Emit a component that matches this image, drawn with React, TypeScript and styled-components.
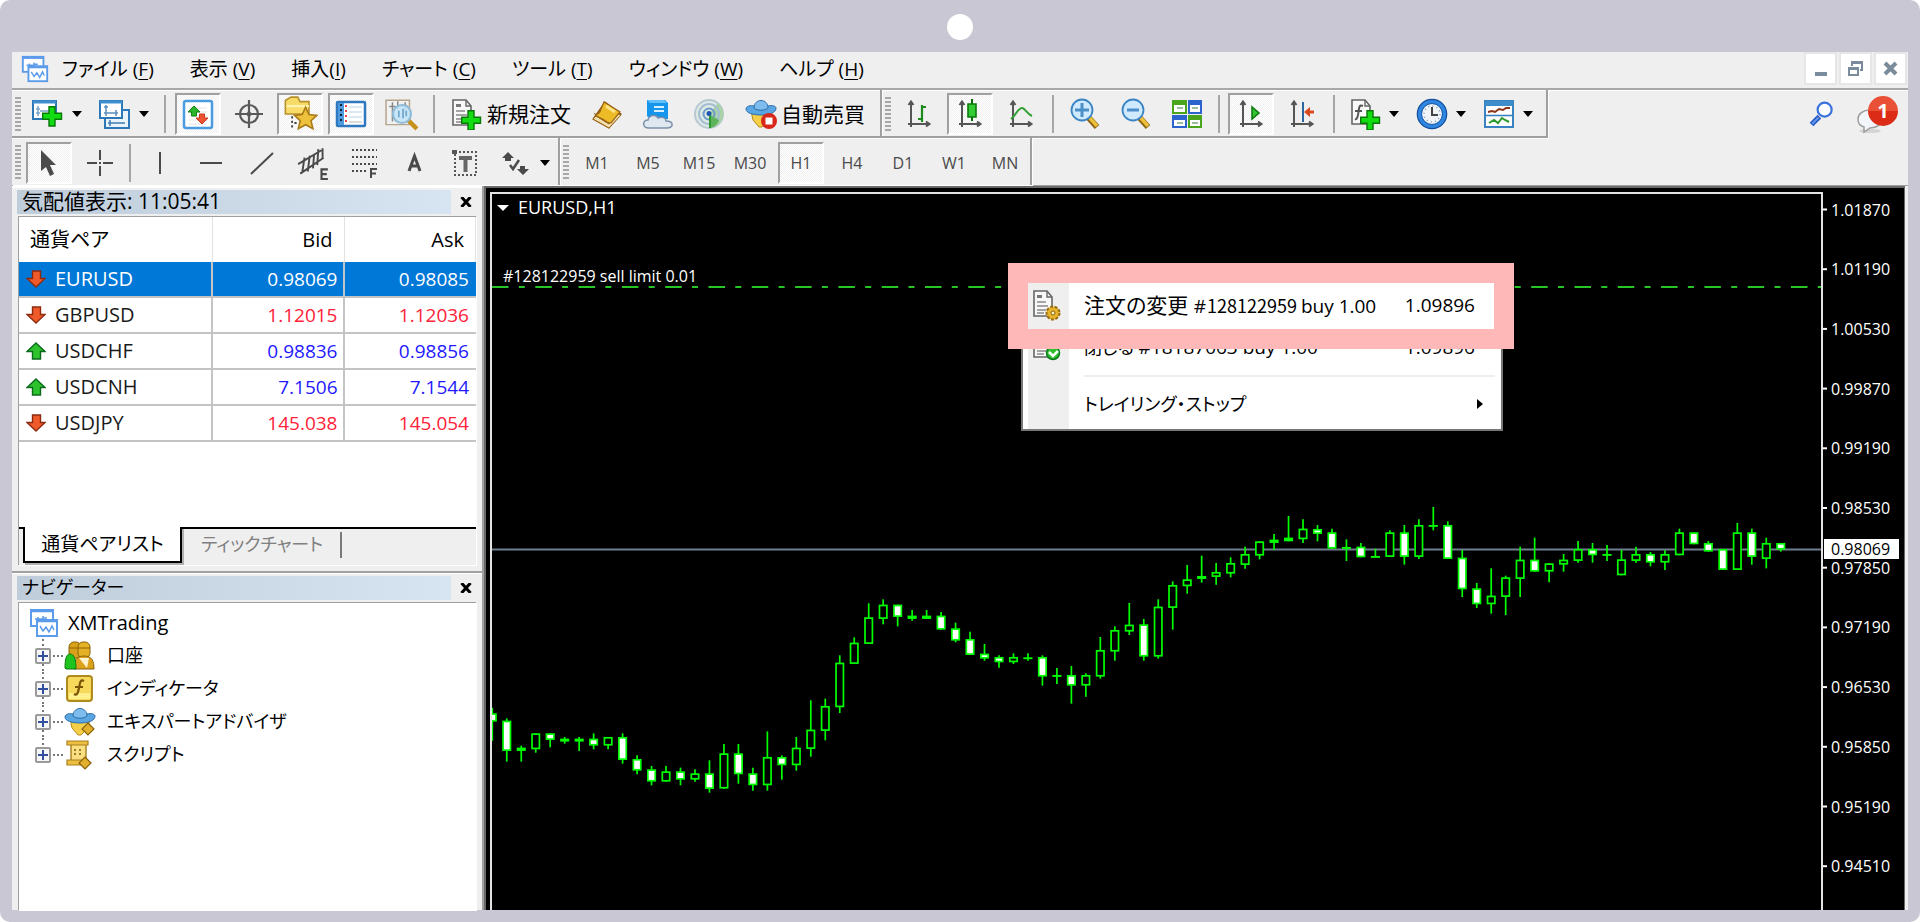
import React from "react";
import styled, { createGlobalStyle, css } from "styled-components";

const LATIN = '"Open Sans", "Noto Sans CJK JP", sans-serif';
const FACE = "#efefef";
const EDGE = "#a0a0a0";
const LIME = "#00ff00";

const GlobalStyle = createGlobalStyle`
  * { box-sizing: border-box; }
  body {
    margin: 0;
    background: #fff;
    color: #000;
    font: 20px/24px ${LATIN};
    font-feature-settings: "palt";
  }
  button, input { font: inherit; font-feature-settings: inherit; color: inherit; }
  button { padding: 0; border: 0; background: none; cursor: pointer; }
  svg { display: block; flex: none; }
`;

const pressedLook = css`
  border: 2px solid;
  border-color: ${EDGE} #fff #fff ${EDGE};
  background: repeating-conic-gradient(#fff 0 25%, #f0f0f0 0 50%) 0 0 / 2px 2px;
`;

const Device = styled.div`
  display: flex;
  flex-direction: column;
  min-height: 100vh;
  padding: 0 12px 12px;
  border-radius: 10px;
  background: #c8c7d3;
`;

const Bezel = styled.div`
  display: flex;
  align-items: center;
  justify-content: center;
  height: 52px;
  padding-top: 2px;
`;

const Camera = styled.span`
  width: 26px;
  height: 26px;
  border-radius: 50%;
  background: #fff;
`;

const Terminal = styled.main`
  flex: 1;
  display: flex;
  flex-direction: column;
  background: ${FACE};
`;

const MenuBar = styled.nav`
  display: flex;
  align-items: center;
  height: 38px;
  padding: 0 1px 3px 8px;
  border-bottom: 2px solid #a8a8a8;
  box-shadow: inset 0 -1px ${FACE}, 0 1px #fff;
`;

const MenuList = styled.ul`
  display: flex;
  flex: 1;
  gap: 36px;
  margin: 0 0 0 12px;
  padding: 0;
  font-size: 19px;
  list-style: none;
`;

const MenuItem = styled.button`
  white-space: nowrap;
  u { text-underline-offset: 3px; }
`;

const WindowButtons = styled.div`
  display: flex;
  gap: 2px;
`;

const WindowButton = styled.button`
  display: grid;
  place-items: center;
  width: 33px;
  height: 33px;
  border: 2px solid #e6e6e6;
  background: #fff;
`;

const ToolRow = styled.div`
  display: flex;
  height: 48px;
`;

const ToolGroup = styled.div`
  display: flex;
  align-items: center;
  gap: 5px;
  padding: 2px 7px 0 3px;
  border-right: 2px solid ${EDGE};
  border-bottom: 2px solid ${EDGE};
  box-shadow: 1px 1px #fff, inset 0 1px #fff;
`;

const ToolRowTwo = styled(ToolRow)`
  border-bottom: 1px solid ${EDGE};
  ${ToolGroup} {
    padding-right: 2px;
    border-bottom: 0;
  }
`;

const Grip = styled.span`
  width: 6px;
  height: 35px;
  background: repeating-linear-gradient(#a8a8a8 0 2px, ${FACE} 2px 4px);
`;

const Divider = styled.span<{ $room: number }>`
  width: 2px;
  height: 38px;
  margin: 0 ${(p) => p.$room}px;
  background: #a6a6a6;
`;

const ToolButton = styled.button<{ $pressed?: boolean }>`
  display: flex;
  align-items: center;
  justify-content: center;
  width: 46px;
  height: 42px;
  color: #4a4a4a;
  font-size: 16px;
  ${(p) => p.$pressed && pressedLook}
`;

const SplitButton = styled(ToolButton)`
  gap: 8px;
  width: auto;
  padding: 0 6px;
`;

const LabelButton = styled(ToolButton)`
  gap: 4px;
  width: auto;
  padding: 0 8px;
  color: #000;
  font-size: 21px;
  white-space: nowrap;
`;

const RightTools = styled.div`
  display: flex;
  align-items: center;
  gap: 10px;
  margin-left: auto;
  padding-right: 9px;
`;

const Alerts = styled.button`
  position: relative;
  width: 44px;
  height: 40px;
`;

const AlertCount = styled.span`
  position: absolute;
  top: 2px;
  right: 1px;
  width: 30px;
  height: 30px;
  border-radius: 50%;
  background: linear-gradient(#ea5036 50%, #dc2c17 50%);
  color: #fff;
  font-weight: 700;
  line-height: 30px;
  text-align: center;
`;

const Workspace = styled.div`
  flex: 1;
  display: flex;
`;

const SideColumn = styled.aside`
  display: flex;
  flex-direction: column;
  flex: 0 0 472px;
  border-right: 2px solid ${EDGE};
`;

const Panel = styled.section<{ $fill?: boolean }>`
  display: flex;
  flex-direction: column;
  flex: ${(p) => (p.$fill ? "1" : "none")};
  padding: ${(p) => (p.$fill ? "3px 5px 0 5px" : "3px 5px 6px 5px")};
  border-top: ${(p) => (p.$fill ? `2px solid ${EDGE}` : "1px solid #fff")};
  box-shadow: inset 0 1px #fff;
`;

const PanelHeader = styled.header`
  display: flex;
  height: 24px;
  margin-bottom: 2px;
`;

const PanelTitle = styled.h2<{ $size: number }>`
  flex: 1;
  margin: 0;
  padding-left: 5px;
  background: linear-gradient(90deg, #bfcddb, #d7e4f2);
  font-size: ${(p) => p.$size}px;
  font-weight: 400;
  line-height: 22px;
`;

const PanelClose = styled.button`
  display: grid;
  place-items: center;
  width: 26px;
  padding-left: 4px;
`;

const PanelBody = styled.div`
  flex: 1;
  margin: 0 1px;
  border: 1px solid ${EDGE};
  border-width: 1px 0 0 1px;
  box-shadow: 1px 1px #fff;
  background: #fff;
`;

const QuoteArea = styled.div`
  min-height: 310px;
`;

const QuoteTable = styled.table`
  width: 100%;
  table-layout: fixed;
  border-collapse: separate;
  border-spacing: 0;
  th {
    height: 45px;
    padding: 0 11px;
    border-right: 1px solid #e2e2e2;
    font-weight: 400;
    text-align: right;
  }
  th:first-child { width: 194px; text-align: left; }
  td {
    height: 36px;
    padding: 0 5px 0 7px;
    border-right: 2px solid #c4c4c4;
    border-bottom: 2px solid #c4c4c4;
    font-size: 19px;
    text-align: right;
  }
  td:last-child { border-right: 0; padding-right: 7px; }
`;

const QuoteRow = styled.tr<{ $up?: boolean; $selected?: boolean }>`
  color: ${(p) => (p.$selected ? "#fff" : p.$up ? "#2418ff" : "#ff2238")};
  background: ${(p) => (p.$selected ? "#0078d7" : "#fff")};
`;

const Symbol = styled.span<{ $selected?: boolean }>`
  display: flex;
  align-items: center;
  gap: 9px;
  color: ${(p) => (p.$selected ? "#fff" : "#1a1a1a")};
  font-size: 20px;
`;

const TabStrip = styled.div`
  display: flex;
  height: 38px;
  border-top: 2px solid #000;
  background: ${FACE};
`;

const ActiveTab = styled.button`
  width: 159px;
  height: 36px;
  margin: -2px 0 0 4px;
  border: 2px solid #000;
  border-top: 0;
  background: #fff;
  box-shadow: 2px 2px #b0b0b0;
  font-size: 19px;
`;

const IdleTab = styled.button`
  height: 26px;
  margin: 3px 0 0 4px;
  padding: 0 17px 2px 15px;
  border-right: 2px solid #7a7a7a;
  color: #808080;
  font-size: 18px;
`;

const Tree = styled.ul`
  margin: 0;
  padding: 4px 0 0 16px;
  list-style: none;
`;

const TreeRoot = styled.li`
  display: flex;
  align-items: center;
  gap: 8px;
  height: 32px;
  margin-left: -7px;
`;

const TreeItem = styled.li`
  display: flex;
  align-items: center;
  height: 33px;
`;

const Branch = styled.span`
  display: flex;
  flex-direction: column;
  align-items: center;
  align-self: stretch;
  width: 16px;
`;

const BranchLine = styled.span<{ $hidden?: boolean }>`
  flex: 1;
  width: 2px;
  background: ${(p) => (p.$hidden ? "none" : "repeating-linear-gradient(#777 0 2px, #fff 2px 5px)")};
`;

const Twig = styled.span`
  width: 10px;
  height: 2px;
  margin: 0 1px 0 2px;
  background: repeating-linear-gradient(90deg, #777 0 2px, #fff 2px 4px);
`;

const Expander = styled.button`
  display: grid;
  place-items: center;
  width: 16px;
  height: 16px;
  border: 2px solid #9a9a9a;
  border-radius: 2px;
  background: #f6f6f6;
`;

const TreeLabel = styled.span`
  margin-left: 11px;
  padding-bottom: 2px;
  font-size: 18px;
`;

const ChartWindow = styled.section`
  position: relative;
  flex: 1;
  display: flex;
  min-width: 0;
  padding: 4px 0 0 4px;
  border: solid #696969;
  border-width: 2px 1px 0 2px;
  margin-right: 3px;
  background: #000;
`;

const Plot = styled.div`
  flex: 1;
  display: flex;
  min-width: 0;
  border: 2px solid #e4e4e4;
  border-bottom: 0;
  svg { flex: 1; min-width: 0; width: 100%; }
`;

const Axis = styled.svg`
  width: 81px;
  overflow: visible;
`;

const ContextMenu = styled.div`
  position: absolute;
  top: 94px;
  left: 535px;
  width: 482px;
  padding: 1px 3px 4px;
  border: 1px solid #777;
  border-width: 1px 2px 2px 2px;
  background: linear-gradient(90deg, #fff 5px, #efefef 5px 46px, #fff 46px);
`;

const ContextItem = styled.button`
  display: flex;
  align-items: center;
  width: 100%;
  height: 42px;
  padding: 0 15px 0 6px;
  font-size: 19px;
  text-align: left;
`;

const ContextIcon = styled.span`
  width: 32px;
  height: 32px;
  margin-right: 20px;
`;

const ContextLabel = styled.span`
  flex: 1;
  white-space: nowrap;
`;

const ContextPrice = styled.span`
  margin-right: 8px;
`;

const ContextKanji = styled.span`
  font-size: 21px;
`;

const ContextKana = styled.span`
  font-size: 18px;
`;

const OrderNumber = styled.span`
  margin: 0 4px 0 1px;
  font: 18px/24px "Noto Sans CJK JP", sans-serif;
`;

const ContextRule = styled.hr`
  height: 2px;
  margin: 7px 3px 6px 58px;
  border: 0;
  background: #efefef;
`;

const Spotlight = styled.div`
  position: absolute;
  top: 75px;
  left: 522px;
  width: 506px;
  height: 86px;
  border: 20px solid #ffb8b8;
  pointer-events: none;
`;

/* ---------- icons ---------- */

const Icon = ({ children, size = 32 }: { children: React.ReactNode; size?: number }) => (
  <svg width={size} height={size} viewBox="0 0 32 32" fill="none" aria-hidden="true">
    {children}
  </svg>
);

const Caret = () => (
  <svg width="10" height="6" viewBox="0 0 10 6" aria-hidden="true">
    <path d="M0 0h10L5 6z" fill="#000" />
  </svg>
);

const Plus = ({ x, y }: { x: number; y: number }) => (
  <path
    transform={`translate(${x} ${y})`}
    d="M7 .7h6v6.500h6.500v6H13V20H7v-6.800H.7v-6H7z"
    fill="#12dd12"
    stroke="#087808"
    strokeWidth="1.400"
  />
);

const DocShape = ({ x = 3, y = 1 }: { x?: number; y?: number }) => (
  <g transform={`translate(${x} ${y})`}>
    <path d="M1 1h13l5 6v19H1z" fill="#f8f8f8" stroke="#666" strokeWidth="1.600" />
    <path d="M14 1v6h5" stroke="#666" strokeWidth="1.400" />
    <path d="M4 5h5v3H4z" fill="#777" />
    <path d="M4 12h9M4 16h11M4 20h9M4 23h7" stroke="#888" strokeWidth="1.300" />
  </g>
);

const Axes = () => (
  <path
    d="M8 4v25M5 26h21M5.500 7L8 3.500 10.500 7M23 23.500l3.500 2.500-3.500 2.500"
    stroke="#555"
    strokeWidth="2"
  />
);

const AppIcon = ({ size = 30 }: { size?: number }) => (
  <Icon size={size}>
    <rect x="3" y="3" width="22" height="16" fill="#fff" stroke="#5b9bea" strokeWidth="2" />
    <path d="M3 4h22" stroke="#5b9bea" strokeWidth="2.500" />
    <path d="M7 12h3m0-2v4m0-2h5m0-3v5m0-3h4" stroke="#5b9bea" strokeWidth="1.500" />
    <rect x="9" y="13" width="20" height="16" fill="#fff" stroke="#5b9bea" strokeWidth="2" />
    <path d="M9 14h20" stroke="#5b9bea" strokeWidth="2.500" />
    <path d="M12 19l3 5 3-4 3 5 3-6 2 4" stroke="#5b9bea" strokeWidth="1.500" />
  </Icon>
);

const NewChart = () => (
  <Icon>
    <rect x="1" y="3" width="23" height="18" fill="#fff" stroke="#2f78b8" strokeWidth="2" />
    <path d="M1 4h23" stroke="#3f8fd0" strokeWidth="3" />
    <path d="M6 8v10M4 11h4M4 15h4M8 13h12" stroke="#7aa4c8" strokeWidth="1.500" />
    <Plus x={10} y={8} />
  </Icon>
);

const Profiles = () => (
  <Icon>
    <rect x="6" y="12" width="24" height="18" fill="#e8f3fc" stroke="#2f78b8" strokeWidth="2" />
    <path d="M9 25h17M11 22v6" stroke="#3f7cb0" strokeWidth="1.500" />
    <rect x="1" y="3" width="22" height="17" fill="#fff" stroke="#2f78b8" strokeWidth="2" />
    <path d="M1 4h22" stroke="#3f8fd0" strokeWidth="3" />
    <path d="M5 15h14M5 9h4M7 7v11M17 12v6" stroke="#5b8fbc" strokeWidth="1.500" />
  </Icon>
);

const MarketWatch = () => (
  <Icon>
    <rect x="2" y="3" width="28" height="27" rx="2" fill="#fff" stroke="#4a9be0" strokeWidth="2.500" />
    <path d="M7 10h18M7 14h18M7 18h18M7 22h18M7 26h18" stroke="#e4e4e4" />
    <path d="M12 8l6 6h-3.500v4h-5v-4H6z" fill="#2ab52a" stroke="#158015" />
    <path d="M20 26l-6-6h3.500v-4h5v4H26z" fill="#ee5433" stroke="#c93a1c" />
  </Icon>
);

const Target = () => (
  <Icon>
    <circle cx="16" cy="16" r="9" stroke="#5a5a5a" strokeWidth="2.200" />
    <circle cx="16" cy="16" r="2.500" fill="#777" />
    <path d="M16 2v28M2 16h28" stroke="#5a5a5a" strokeWidth="2.200" />
  </Icon>
);

const FolderStar = () => (
  <Icon size={36}>
    <path d="M3 4l5-3h6l2 4h8v11H3z" fill="#f9dc68" stroke="#b8902a" strokeWidth="1.400" />
    <path d="M4 9h20" stroke="#fff3b0" strokeWidth="2" />
    <path d="M9 18v12M11 24h4" stroke="#444" strokeWidth="1.600" strokeDasharray="2 2" />
    <path d="M21 10l3 6.500 7 .700-5.200 4.800L27.500 29 21 25.500 14.500 29l1.700-7L11 17.200l7-.7z" fill="#eec13c" stroke="#a87a18" strokeWidth="1.400" />
  </Icon>
);

const DataWindow = () => (
  <Icon>
    <rect x="2" y="4" width="28" height="24" rx="1" fill="#fff" stroke="#2f78c0" strokeWidth="2.500" />
    <path d="M3 5h6v22H3z" fill="#4e9ade" />
    <path d="M6 6v20" stroke="#123" strokeWidth="2" strokeDasharray="2 3" />
    <path d="M11 7v19" stroke="#e44" strokeWidth="2" strokeDasharray="2 3" />
    <path d="M14 9h13M14 14h13M14 19h13" stroke="#cfe0f2" strokeWidth="1.500" />
    <path d="M14 24h13" stroke="#bbb" />
  </Icon>
);

const Tester = () => (
  <Icon size={34}>
    <path d="M1 3h22v23H1z" fill="#f2f2f2" stroke="#b5a48c" strokeWidth="1.400" />
    <path d="M7 5v18M12 4v8M19 5v10M4 9h6M15 8h6" stroke="#888" strokeWidth="1.400" />
    <path d="M22 22l8 8" stroke="#c8901c" strokeWidth="4" />
    <circle cx="16" cy="16" r="8.500" fill="#c3e4f8" fillOpacity=".9" stroke="#8fbbd8" strokeWidth="2" />
    <path d="M13 13v6M17 11v9M20 13v5" stroke="#6fa6cc" strokeWidth="1.600" />
  </Icon>
);

const NewOrder = () => (
  <Icon>
    <DocShape x={1} y={1} />
    <Plus x={10} y={12} />
  </Icon>
);

const Book = () => (
  <Icon>
    <path d="M2 21l12-17 16 12-12 14z" fill="#b87818" stroke="#8a5410" strokeWidth="1.200" />
    <path d="M2 21l3-3 13 8 9-10 3 1-12 13z" fill="#f3e0b0" stroke="#9a6418" />
    <path d="M4 16c3 1 5-1 6-5l3-7 16 10-9 11c-3 0-5-1-7-3s-6-2-9-6z" fill="#eebb28" stroke="#9a6418" strokeWidth="1.200" />
    <path d="M15 8l9 6" stroke="#fbe58a" strokeWidth="3" />
  </Icon>
);

const CloudServer = () => (
  <Icon>
    <path d="M5 2h18l3 3v16H8l-3-3z" fill="#1596ec" />
    <path d="M5 2h17l3 3H8z" fill="#64c0fa" />
    <path d="M12 9h10M12 13h10" stroke="#d7f0ff" strokeWidth="2" />
    <path d="M7 30c-7 0-7-8-1-8 1-5 8-6 10-2 4-2 8 0 8 3 8 0 8 7 1 7z" fill="#dfe7f1" stroke="#7d90aa" strokeWidth="1.500" />
  </Icon>
);

const Signals = () => (
  <Icon>
    <circle cx="16" cy="16" r="14" fill="#dfe9e6" stroke="#b6c9d0" strokeWidth="2" />
    <path d="M16 16V30A14 14 0 0 0 25 5z" fill="#a9d2a9" />
    <circle cx="16" cy="16" r="10" stroke="#a3bfd2" strokeWidth="2" />
    <circle cx="16" cy="16" r="5.500" stroke="#6d9cc8" strokeWidth="2" />
    <path d="M17 17v13c5-1 8-4 9-8" fill="#5db45d" />
    <path d="M17 16v14" stroke="#2f9a2f" strokeWidth="2" />
    <circle cx="16" cy="15.500" r="2.500" fill="#1f58b0" />
  </Icon>
);

const HatShape = () => (
  <g>
    <path d="M6 13h20l-2 9-7 7h-3l-6-7z" fill="#f5cf48" stroke="#b88a1e" />
    <path d="M1 11c0-3 5-4 8-3 3 2 11 2 14 0 4-1 8 0 8 2 0 5-7 7-15 7S1 15 1 11z" fill="#5aa6e2" stroke="#2c6ea8" />
    <path d="M9 10c0-10 14-10 14 0-3 3-11 3-14 0z" fill="#7dbcec" stroke="#2c6ea8" />
  </g>
);

const AutoTrade = () => (
  <Icon>
    <HatShape />
    <circle cx="24" cy="23" r="8" fill="#d8281a" />
    <path d="M20.500 19.500h7v7h-7z" fill="#fff" />
  </Icon>
);

const BarsIcon = () => (
  <Icon>
    <Axes />
    <path d="M19 7v17M19 9h4M15 21h4" stroke="#1c8a1c" strokeWidth="2.200" />
  </Icon>
);

const CandlesIcon = () => (
  <Icon>
    <Axes />
    <path d="M18 1v22" stroke="#0a6a0a" strokeWidth="2" />
    <path d="M14 6h8v13h-8z" fill="#34cc34" stroke="#0a7a0a" strokeWidth="1.600" />
  </Icon>
);

const LineIcon = () => (
  <Icon>
    <Axes />
    <path d="M6 21c5-4 7-11 11-11 3 0 5 6 10 8" stroke="#35a035" strokeWidth="2" />
  </Icon>
);

const Zoomer = ({ plus }: { plus?: boolean }) => (
  <Icon>
    <path d="M19 19l9 10" stroke="#8a6210" strokeWidth="6" />
    <path d="M20 19l8 9" stroke="#edc03a" strokeWidth="3.500" />
    <circle cx="13" cy="12" r="10.500" fill="#cfeaff" stroke="#3b84c4" strokeWidth="1.800" />
    <path d={plus ? "M6 12h14M13 5v14" : "M7 12h12"} stroke="#4a8fc8" strokeWidth="3" />
  </Icon>
);

const TileIcon = () => (
  <Icon>
    <path d="M1 2h15v14H1zM17 17h14v13H17z" fill="#4aa51c" />
    <path d="M17 2h14v14H17zM1 17h15v13H1z" fill="#2d63cc" />
    <path d="M3 7h11v7H3zM19 7h10v7H19zM3 22h11v6H3zM19 22h10v6H19z" fill="#fff" />
    <path d="M6 10h6M21 10h6M6 25h6M21 25h6" stroke="#9abf9a" strokeWidth="2" />
  </Icon>
);

const AutoScroll = () => (
  <Icon>
    <Axes />
    <path d="M17 9v12l7-6z" fill="#34c334" stroke="#0a7a0a" strokeWidth="1.500" />
  </Icon>
);

const ChartShift = () => (
  <Icon>
    <Axes />
    <path d="M17 4v20" stroke="#2a66a0" strokeWidth="2" />
    <path d="M18 14l6-5v3.500h4v3h-4V19z" fill="#d84a20" />
  </Icon>
);

const Indicators = () => (
  <Icon>
    <path d="M3 2h13l5 6v18H3z" fill="#fafafa" stroke="#666" strokeWidth="1.600" />
    <path d="M16 2v6h5" stroke="#666" strokeWidth="1.400" />
    <path d="M14 8c-4-2-4 2-4.500 6S8 22 6 21M6 13h7" stroke="#555" strokeWidth="2" />
    <Plus x={11} y={12} />
  </Icon>
);

const ClockIcon = () => (
  <Icon>
    <circle cx="16" cy="16" r="12.500" fill="#f0f4f8" stroke="#2f86e0" strokeWidth="4.500" />
    <circle cx="16" cy="16" r="14.700" stroke="#134d9c" strokeWidth="1.200" />
    <circle cx="16" cy="16" r="10.500" stroke="#1a58a8" strokeWidth="1" />
    <circle cx="16" cy="16" r="8" stroke="#9ab" strokeWidth="1.500" strokeDasharray="1.200 3" />
    <path d="M16 9v8h6" stroke="#444" strokeWidth="2" />
  </Icon>
);

const TemplateIcon = () => (
  <Icon>
    <rect x="2" y="3" width="28" height="26" fill="#fff" stroke="#3b82c0" strokeWidth="2" />
    <path d="M2 5.500h28" stroke="#3f8ccc" strokeWidth="5" />
    <path d="M3 17.500h26" stroke="#3b82c0" strokeWidth="1.600" />
    <path d="M5 14l4-1 3 1 4-3 4 1 3-2h4" stroke="#8c3418" strokeWidth="2" />
    <path d="M6 25l5-3 4 3 4-5 3 2 4 2" stroke="#2a9a2a" strokeWidth="2" />
  </Icon>
);

const PointerIcon = () => (
  <Icon>
    <path d="M8 3v21l5-4 4 9 4-2-4-9h6z" fill="#4a4a4a" />
  </Icon>
);

const CrossIcon = () => (
  <Icon>
    <path d="M16 3v10M16 19v10M3 16h10M19 16h10M15 16h2" stroke="#4a4a4a" strokeWidth="2" />
  </Icon>
);

const StrokeIcon = ({ d, width = 2 }: { d: string; width?: number }) => (
  <Icon>
    <path d={d} stroke="#4a4a4a" strokeWidth={width} />
  </Icon>
);

const ChannelIcon = () => (
  <Icon size={34}>
    <path d="M2 17L24 4M4 26L26 11M8 11l-2 13M13 9l-2 15M17 8l-1 13M21 3l-1 15M25 2v9" stroke="#4a4a4a" strokeWidth="1.800" />
    <path d="M30 22h-6v9h6M24 26.500h5" stroke="#4a4a4a" strokeWidth="2" />
  </Icon>
);

const FiboIcon = () => (
  <Icon>
    <path d="M4 3h25M4 10h25M4 17h25M4 24h16" stroke="#4a4a4a" strokeWidth="2" strokeDasharray="2 2" />
    <path d="M23 31v-9h6M23 26.500h5" stroke="#4a4a4a" strokeWidth="2" />
  </Icon>
);

const TextFrame = () => (
  <Icon>
    <rect x="5" y="5" width="21" height="23" stroke="#555" strokeWidth="2" strokeDasharray="2 2" />
    <path d="M2 3h5v4H2z" fill="#555" />
    <path d="M9 11h13M15.500 11v14" stroke="#666" strokeWidth="4" />
  </Icon>
);

const ShapesIcon = () => (
  <Icon>
    <path d="M2 11l6-6 6 6H11v3H5v-3zM17 22h3v-3h5v3h4l-6 6z" fill="#4a4a4a" />
    <path d="M10 18l3 4 6-9" stroke="#4a4a4a" strokeWidth="2.500" />
  </Icon>
);

const SearchIcon = () => (
  <Icon size={28}>
    <path d="M4 28l9-9" stroke="#2a5ec8" strokeWidth="6" />
    <path d="M5 27l7-7" stroke="#6f9bee" strokeWidth="2" />
    <circle cx="19" cy="11" r="8" fill="#fdfdff" stroke="#3a72dc" strokeWidth="2.500" />
  </Icon>
);

const Trend = ({ up }: { up?: boolean }) => (
  <svg width="20" height="20" viewBox="0 0 20 20" aria-hidden="true">
    {up ? (
      <path d="M10 2l9 8.500h-4.500V18h-8v-7.500H1z" fill="#2cc32c" stroke="#0c6a1c" strokeWidth="1.400" />
    ) : (
      <path d="M10 18l9-8.500h-4.500V2h-8v7.500H1z" fill="#ee5a2a" stroke="#8e2a10" strokeWidth="1.400" />
    )}
  </svg>
);

const AccountsIcon = () => (
  <Icon>
    <rect x="5" y="2" width="12" height="16" rx="5" fill="#d9a21a" stroke="#8a620c" />
    <rect x="14" y="2" width="12" height="16" rx="5" fill="#e6b225" stroke="#8a620c" />
    <path d="M5 8h21" stroke="#8a620c" />
    <path d="M10 29c0-8 2-13 10-13s10 5 10 13z" fill="#dda21c" stroke="#8a620c" />
    <path d="M15 18l8 10 2-10z" fill="#fff2d0" />
    <path d="M1 28c0-8 1-14 5-14s6 5 6 15H2z" fill="#1fc41f" stroke="#0d7a0d" />
  </Icon>
);

const FunctionIcon = () => (
  <Icon>
    <rect x="3" y="3" width="25" height="25" rx="3" fill="#f6d95a" stroke="#b08a1e" strokeWidth="2" />
    <path d="M5 20h21v6H5z" fill="#fff08c" />
    <path d="M20 8c-4-2-4 2-5 7s-2 8-5 6M11 14h8" stroke="#7a5208" strokeWidth="2.200" />
  </Icon>
);

const Diamond = ({ x, y }: { x: number; y: number }) => (
  <path transform={`translate(${x} ${y})`} d="M6 0l6 6-6 6-6-6z" fill="#e2b02c" stroke="#8a620c" strokeWidth="1.200" />
);

const ExpertIcon = () => (
  <Icon>
    <HatShape />
    <Diamond x={18} y={17} />
  </Icon>
);

const ScriptIcon = () => (
  <Icon>
    <path d="M7 5h15v18H7z" fill="#f9df80" stroke="#a87e1e" strokeWidth="1.400" />
    <path d="M3 2h21v4H3zM3 21h18v5H3z" fill="#eec040" stroke="#a87e1e" strokeWidth="1.200" />
    <path d="M10 11h2m3 0h2m-7 4h2m3 0h2" stroke="#7a5c14" strokeWidth="1.600" />
    <Diamond x={15} y={18} />
  </Icon>
);

const OrderEdit = () => (
  <Icon>
    <DocShape x={1} y={1} />
    <circle cx="21" cy="24" r="6.500" fill="#e6b32c" stroke="#9a6c10" strokeWidth="2" strokeDasharray="3 1.500" />
    <circle cx="21" cy="24" r="2" fill="#fff0c0" stroke="#8a620c" />
  </Icon>
);

const OrderClose = () => (
  <Icon>
    <DocShape x={1} y={0} />
    <circle cx="21" cy="22" r="6.500" fill="#2cc02c" stroke="#0c7a1c" strokeWidth="1.500" />
    <path d="M17 21l4 4 5-5" stroke="#fff" strokeWidth="2.500" />
  </Icon>
);

/* ---------- chart ---------- */

type Kind = "w" | "h" | "d"; // filled, hollow, flat
type Bar = [high: number, top: number, bottom: number, low: number, kind: Kind];

// Heights are in thirds of a pixel below each session's own origin.
const SESSIONS: { origin: number; bars: Bar[] }[] = [
  {
    origin: 366,
    bars: [
      [443, 460, 485, 542, "w"], [475, 482, 573, 605, "w"], [557, 563, 573, 605, "d"], [520, 520, 568, 578, "h"],
      [520, 520, 540, 562, "w"], [531, 536, 545, 551, "d"], [531, 536, 545, 573, "d"], [520, 536, 557, 568, "w"],
      [531, 531, 557, 568, "h"], [520, 531, 600, 611, "w"], [586, 597, 632, 643, "w"], [618, 628, 665, 676, "w"],
      [618, 634, 665, 665, "h"], [623, 634, 659, 676, "w"], [628, 640, 659, 665, "h"], [601, 640, 687, 698, "w"],
      [552, 580, 686, 686, "h"], [552, 580, 643, 671, "w"], [623, 640, 676, 692, "w"], [514, 591, 676, 692, "h"],
      [586, 591, 616, 659, "w"], [531, 563, 616, 632, "h"], [421, 509, 567, 590, "h"], [416, 438, 513, 541, "h"],
      [286, 308, 442, 459, "h"], [232, 248, 312, 312, "h"], [130, 172, 252, 252, "h"], [118, 134, 177, 193, "h"],
      [134, 134, 171, 199, "w"], [150, 167, 177, 182, "d"], [150, 167, 177, 177, "d"], [156, 167, 209, 209, "w"],
      [188, 205, 242, 247, "w"],
    ],
  },
  {
    origin: 306,
    bars: [
      [395, 417, 465, 465, "w"], [432, 461, 476, 482, "w"], [466, 471, 487, 503, "w"], [460, 471, 487, 492, "h"],
      [460, 472, 476, 482, "d"], [466, 471, 530, 557, "w"], [504, 525, 530, 552, "d"], [498, 525, 557, 611, "w"],
      [520, 525, 557, 590, "h"], [411, 450, 530, 536, "h"], [379, 390, 455, 482, "h"], [309, 374, 395, 405, "h"],
      [357, 373, 470, 482, "w"], [298, 320, 470, 476, "h"], [244, 255, 324, 389, "h"], [195, 238, 259, 281, "h"],
      [167, 228, 237, 248, "d"], [189, 216, 231, 254, "h"], [172, 189, 221, 232, "h"], [140, 162, 195, 206, "h"],
      [124, 124, 167, 178, "h"], [102, 119, 129, 150, "d"], [48, 113, 124, 124, "d"], [58, 86, 118, 129, "h"],
      [75, 87, 102, 124, "w"], [86, 97, 146, 146, "w"], [118, 141, 146, 183, "d"], [129, 140, 172, 172, "w"],
      [146, 168, 172, 172, "d"],
    ],
  },
  {
    origin: 286,
    bars: [
      [151, 157, 231, 231, "h"], [135, 157, 231, 254, "w"], [118, 135, 231, 237, "h"], [81, 135, 140, 151, "d"],
      [124, 135, 237, 237, "w"], [210, 233, 328, 351, "w"], [309, 325, 373, 384, "w"], [265, 347, 373, 401, "h"],
      [287, 292, 351, 405, "h"], [200, 239, 297, 351, "h"], [173, 239, 275, 275, "w"], [250, 250, 275, 307, "h"],
      [222, 239, 254, 275, "h"], [183, 207, 243, 248, "h"], [189, 207, 226, 248, "w"], [195, 222, 226, 243, "d"],
      [210, 238, 286, 286, "h"], [200, 222, 243, 248, "h"], [216, 222, 248, 259, "w"], [211, 222, 248, 270, "h"],
      [146, 157, 226, 226, "h"], [157, 157, 193, 193, "w"], [183, 189, 215, 215, "w"], [207, 207, 270, 270, "w"],
      [129, 157, 270, 270, "h"], [146, 157, 231, 254, "w"], [173, 189, 237, 265, "h"], [189, 189, 209, 215, "w"],
    ],
  },
];

const BARS = SESSIONS.flatMap(({ origin, bars }) =>
  bars.map(([high, top, bottom, low, kind]) => ({
    high: origin + high / 3,
    top: origin + top / 3,
    bottom: origin + bottom / 3,
    low: origin + low / 3,
    kind,
  })),
);

const BAR_STEP = 14.477;
const BODY_FILL: Record<Kind, string> = { w: "#fff", h: "#000", d: LIME };

const Candles = () => (
  <g stroke={LIME} strokeWidth="1.700">
    {BARS.map((bar, i) => {
      const x = i * BAR_STEP + 0.3;
      const body = Math.max(bar.bottom - bar.top - 1.7, 0.2);
      return (
        <g key={i}>
          <path d={`M${x} ${bar.high}V${bar.low}`} />
          <rect x={x - 3.7} y={bar.top + 0.8} width="7.400" height={body} fill={BODY_FILL[bar.kind]} />
        </g>
      );
    })}
  </g>
);

const PRICES = [
  "1.01870", "1.01190", "1.00530", "0.99870", "0.99190", "0.98530",
  "0.97850", "0.97190", "0.96530", "0.95850", "0.95190", "0.94510",
];

const PriceAxis = () => (
  <Axis aria-label="価格">
    {PRICES.map((price, i) => {
      const y = 17.5 + i * 59.7;
      return (
        <g key={price}>
          <path d={`M0 ${y}h4`} stroke="#fff" strokeWidth="2" />
          <text x="8" y={y + 6} fill="#fff" fontSize="16">{price}</text>
        </g>
      );
    })}
    <rect x="1" y="347" width="75" height="20" fill="#fff" />
    <text x="8" y="363" fill="#000" fontSize="16">0.98069</text>
  </Axis>
);

/* ---------- content ---------- */

const MENUS = [
  ["ファイル ", "F"], ["表示 ", "V"], ["挿入", "I"], ["チャート ", "C"],
  ["ツール ", "T"], ["ウィンドウ ", "W"], ["ヘルプ ", "H"],
];

const QUOTES = [
  { symbol: "EURUSD", bid: "0.98069", ask: "0.98085", selected: true },
  { symbol: "GBPUSD", bid: "1.12015", ask: "1.12036" },
  { symbol: "USDCHF", bid: "0.98836", ask: "0.98856", up: true },
  { symbol: "USDCNH", bid: "7.1506", ask: "7.1544", up: true },
  { symbol: "USDJPY", bid: "145.038", ask: "145.054" },
];

const TREE = [
  { label: "口座", icon: <AccountsIcon /> },
  { label: "インディケータ", icon: <FunctionIcon /> },
  { label: "エキスパートアドバイザ", icon: <ExpertIcon /> },
  { label: "スクリプト", icon: <ScriptIcon /> },
];

const PERIODS = ["M1", "M5", "M15", "M30", "H1", "H4", "D1", "W1", "MN"];

const Tool = ({ name, pressed, children }: { name: string; pressed?: boolean; children: React.ReactNode }) => (
  <ToolButton type="button" aria-label={name} aria-pressed={pressed} $pressed={pressed}>
    {children}
  </ToolButton>
);

const Split = ({ name, children }: { name: string; children: React.ReactNode }) => (
  <SplitButton type="button" aria-label={name} aria-haspopup="menu">
    {children}
    <Caret />
  </SplitButton>
);

const Header = ({ title, size }: { title: string; size: number }) => (
  <PanelHeader>
    <PanelTitle $size={size}>{title}</PanelTitle>
    <PanelClose type="button" aria-label="閉じる">
      <svg width="12" height="10" viewBox="0 0 12 10">
        <path d="M1.500 0l9 10M10.500 0l-9 10" stroke="#000" strokeWidth="3" />
      </svg>
    </PanelClose>
  </PanelHeader>
);

const MainMenu = () => (
  <MenuBar>
    <AppIcon />
    <MenuList>
      {MENUS.map(([label, key]) => (
        <li key={key}>
          <MenuItem type="button">{label}(<u>{key}</u>)</MenuItem>
        </li>
      ))}
    </MenuList>
    <WindowButtons>
      <WindowButton type="button" aria-label="最小化">
        <svg width="20" height="20"><path d="M4 15h12" stroke="#7a8b9c" strokeWidth="4" /></svg>
      </WindowButton>
      <WindowButton type="button" aria-label="元に戻す">
        <svg width="20" height="20" fill="none" stroke="#7a8b9c" strokeWidth="2">
          <path d="M6 7V3h10v8h-2M6 4h10" />
          <path d="M3 9h9v7H3zM3 10h9" />
        </svg>
      </WindowButton>
      <WindowButton type="button" aria-label="閉じる">
        <svg width="20" height="20"><path d="M4 4l11 11M15 4L4 15" stroke="#7a8b9c" strokeWidth="4" /></svg>
      </WindowButton>
    </WindowButtons>
  </MenuBar>
);

const MainTools = () => (
  <ToolRow>
    <ToolGroup>
      <Grip />
      <Split name="新規チャート"><NewChart /></Split>
      <Split name="チャートの組表示"><Profiles /></Split>
      <Divider $room={4} />
      <Tool name="気配値表示" pressed><MarketWatch /></Tool>
      <Tool name="データウィンドウ"><Target /></Tool>
      <Tool name="ナビゲーター" pressed><FolderStar /></Tool>
      <Tool name="ターミナル" pressed><DataWindow /></Tool>
      <Tool name="ストラテジーテスター"><Tester /></Tool>
      <Divider $room={3} />
      <LabelButton type="button"><NewOrder />新規注文</LabelButton>
      <Tool name="エディター"><Book /></Tool>
      <Tool name="クラウド"><CloudServer /></Tool>
      <Tool name="シグナル"><Signals /></Tool>
      <LabelButton type="button"><AutoTrade />自動売買</LabelButton>
    </ToolGroup>
    <ToolGroup>
      <Grip />
      <Tool name="バーチャート"><BarsIcon /></Tool>
      <Tool name="ローソク足" pressed><CandlesIcon /></Tool>
      <Tool name="ラインチャート"><LineIcon /></Tool>
      <Divider $room={3} />
      <Tool name="拡大"><Zoomer plus /></Tool>
      <Tool name="縮小"><Zoomer /></Tool>
      <Tool name="整列"><TileIcon /></Tool>
      <Divider $room={3} />
      <Tool name="自動スクロール" pressed><AutoScroll /></Tool>
      <Tool name="チャートシフト"><ChartShift /></Tool>
      <Divider $room={3} />
      <Split name="インディケータ"><Indicators /></Split>
      <Split name="時間足"><ClockIcon /></Split>
      <Split name="定型チャート"><TemplateIcon /></Split>
    </ToolGroup>
    <RightTools>
      <Tool name="検索"><SearchIcon /></Tool>
      <Alerts type="button" aria-label="通知">
        <svg width="44" height="40" viewBox="0 0 44 40" aria-hidden="true">
          <ellipse cx="15" cy="37" rx="11" ry="2" fill="#d4d4d4" />
          <path d="M15 16c7 0 12 4 12 9s-5 9-12 9l-6 4 0-5c-4-1-6-4-6-8 0-5 5-9 12-9z" fill="#f2f5fa" stroke="#9c9c9c" strokeWidth="1.500" />
        </svg>
        <AlertCount>1</AlertCount>
      </Alerts>
    </RightTools>
  </ToolRow>
);

const DrawingTools = () => (
  <ToolRowTwo>
    <ToolGroup>
      <Grip />
      <Tool name="カーソル" pressed><PointerIcon /></Tool>
      <Tool name="クロスヘア"><CrossIcon /></Tool>
      <Divider $room={1} />
      <Tool name="垂直線"><StrokeIcon d="M16 5v22" /></Tool>
      <Tool name="水平線"><StrokeIcon d="M5 16h22" /></Tool>
      <Tool name="トレンドライン"><StrokeIcon d="M5 27L27 6" /></Tool>
      <Tool name="チャネル"><ChannelIcon /></Tool>
      <Tool name="フィボナッチ"><FiboIcon /></Tool>
      <Tool name="テキスト"><StrokeIcon d="M10 24l5.500-15 5.500 15M12 19h8" width={3} /></Tool>
      <Tool name="テキストラベル"><TextFrame /></Tool>
      <Split name="矢印"><ShapesIcon /></Split>
    </ToolGroup>
    <ToolGroup>
      <Grip />
      {PERIODS.map((period) => (
        <ToolButton key={period} type="button" $pressed={period === "H1"} aria-pressed={period === "H1"}>
          {period}
        </ToolButton>
      ))}
    </ToolGroup>
  </ToolRowTwo>
);

const MarketPanel = () => (
  <Panel>
    <Header title="気配値表示: 11:05:41" size={21} />
    <PanelBody>
      <QuoteArea>
        <QuoteTable>
          <thead>
            <tr>
              <th scope="col">通貨ペア</th>
              <th scope="col">Bid</th>
              <th scope="col">Ask</th>
            </tr>
          </thead>
          <tbody>
            {QUOTES.map((q) => (
              <QuoteRow key={q.symbol} $up={q.up} $selected={q.selected}>
                <td><Symbol $selected={q.selected}><Trend up={q.up} />{q.symbol}</Symbol></td>
                <td>{q.bid}</td>
                <td>{q.ask}</td>
              </QuoteRow>
            ))}
          </tbody>
        </QuoteTable>
      </QuoteArea>
      <TabStrip role="tablist">
        <ActiveTab type="button" role="tab" aria-selected="true">通貨ペアリスト</ActiveTab>
        <IdleTab type="button" role="tab" aria-selected="false">ティックチャート</IdleTab>
      </TabStrip>
    </PanelBody>
  </Panel>
);

const NavigatorPanel = () => (
  <Panel $fill>
    <Header title="ナビゲーター" size={18} />
    <PanelBody>
      <Tree>
        <TreeRoot><AppIcon size={32} />XMTrading</TreeRoot>
        {TREE.map((node, i) => (
          <TreeItem key={node.label}>
            <Branch>
              <BranchLine />
              <Expander type="button" aria-label={`${node.label}を展開`}>
                <svg width="10" height="10"><path d="M0 5h10M5 0v10" stroke="#3350a0" strokeWidth="2" /></svg>
              </Expander>
              <BranchLine $hidden={i === TREE.length - 1} />
            </Branch>
            <Twig />
            {node.icon}
            <TreeLabel>{node.label}</TreeLabel>
          </TreeItem>
        ))}
      </Tree>
    </PanelBody>
  </Panel>
);

const OrderMenu = () => (
  <ContextMenu role="menu">
    <ContextItem type="button" role="menuitem">
      <ContextIcon><OrderEdit /></ContextIcon>
      <ContextLabel>
        <ContextKanji>注文の変更 </ContextKanji>#<OrderNumber>128122959</OrderNumber>buy 1.00
      </ContextLabel>
      <ContextPrice>1.09896</ContextPrice>
    </ContextItem>
    <ContextItem type="button" role="menuitem">
      <ContextIcon><OrderClose /></ContextIcon>
      <ContextLabel><ContextKana>閉じる </ContextKana>#18187063 buy 1.00</ContextLabel>
      <ContextPrice>1.09896</ContextPrice>
    </ContextItem>
    <ContextRule />
    <ContextItem type="button" role="menuitem" aria-haspopup="menu">
      <ContextIcon />
      <ContextLabel><ContextKana>トレイリング・ストップ</ContextKana></ContextLabel>
      <svg width="6" height="10"><path d="M0 0l6 5-6 5z" fill="#000" /></svg>
    </ContextItem>
  </ContextMenu>
);

const Chart = () => (
  <ChartWindow>
    <Plot>
      <svg role="img" aria-label="EURUSD,H1">
        <path d="M5 11h12l-6 6z" fill="#fff" />
        <text x="26" y="20" fill="#fff" fontSize="18">EURUSD,H1</text>
        <text x="11" y="88" fill="#fff" fontSize="16">#128122959 sell limit 0.01</text>
        <line x1="0" x2="100%" y1="93" y2="93" stroke="#28c428" strokeWidth="2" strokeDasharray="16.500 10.300 6 10.500" />
        <line x1="0" x2="100%" y1="355.500" y2="355.500" stroke="#6f7f8e" strokeWidth="2" />
        <Candles />
      </svg>
    </Plot>
    <PriceAxis />
    <OrderMenu />
    <Spotlight />
  </ChartWindow>
);

export default function App() {
  return (
    <>
      <GlobalStyle />
      <Device>
        <Bezel><Camera /></Bezel>
        <Terminal>
          <MainMenu />
          <MainTools />
          <DrawingTools />
          <Workspace>
            <SideColumn>
              <MarketPanel />
              <NavigatorPanel />
            </SideColumn>
            <Chart />
          </Workspace>
        </Terminal>
      </Device>
    </>
  );
}
